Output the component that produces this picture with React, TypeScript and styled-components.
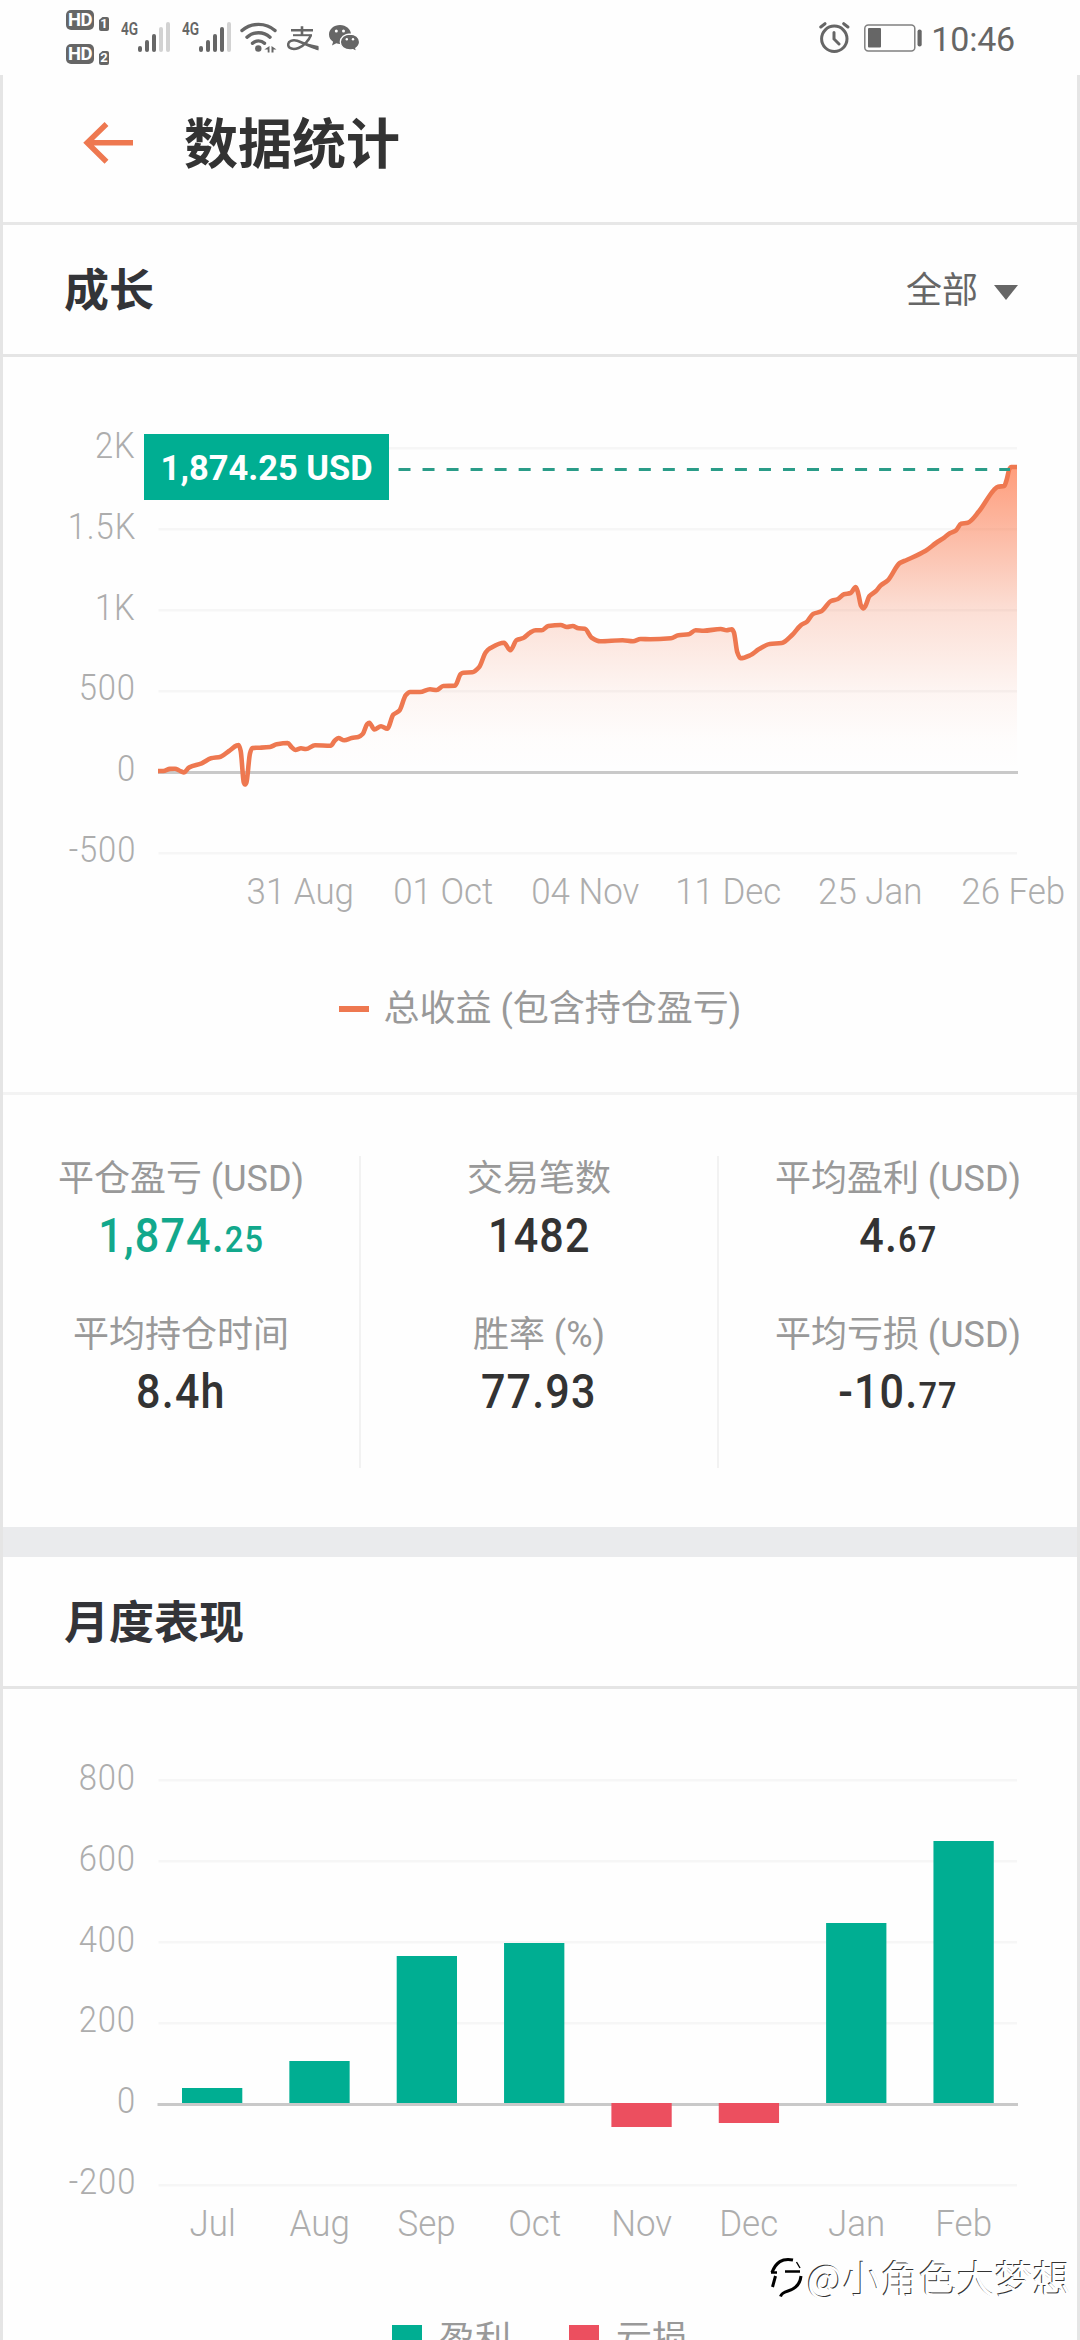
import React from "react";
import styled, { createGlobalStyle } from "styled-components";

const GREEN = "#00ae92";
const RED = "#ec4f5f";
const ORANGE = "#ee7850";

const GlobalStyle = createGlobalStyle`
  * { box-sizing: border-box; }
  html, body { margin: 0; padding: 0; background: #fff; overflow: hidden; }
  body { font-family: Roboto, "Noto Sans CJK SC", sans-serif; color: #333; }
  svg { display: block; flex: none; }
`;

const Screen = styled.div`
  position: relative;
  width: 1080px;
  height: 2340px;
  overflow: hidden;
  background: #fefefe;
`;

/* ---------- status bar ---------- */

const StatusBar = styled.div`
  display: flex;
  justify-content: space-between;
  height: 75px;
  padding: 0 65px 0 65px;
  color: #666;
`;

const StatusLeft = styled.div`
  display: flex;
  align-items: flex-start;
`;

const SimStack = styled.div`
  display: flex;
  flex-direction: column;
  gap: 14px;
  margin: 10px 12px 0 1px;
`;

const SimRow = styled.div`
  display: flex;
  align-items: flex-end;
  gap: 5px;
`;

const HdBadge = styled.span`
  width: 28px;
  height: 20px;
  border-radius: 5px;
  background: #666;
  color: #fff;
  font-size: 18.5px;
  font-weight: 700;
  line-height: 21px;
  text-align: center;
  letter-spacing: -0.5px;
`;

const SimBadge = styled.span`
  width: 10px;
  height: 14px;
  margin-bottom: -1px;
  border-radius: 2px;
  background: #666;
  clip-path: polygon(35% 0, 100% 0, 100% 100%, 0 100%, 0 22%);
  color: #fff;
  font-size: 13px;
  font-weight: 700;
  line-height: 14px;
  text-align: center;
`;

const Signal = styled.div<{ $gap: number }>`
  display: flex;
  align-items: flex-start;
  margin-right: ${(p) => p.$gap}px;
`;

const NetLabel = styled.span`
  width: 16px;
  margin-top: 19px;
  font-size: 19px;
  font-weight: 600;
  line-height: 20px;
  display: flex;
  span {
    transform: scaleX(0.72);
    transform-origin: left;
  }
`;

const SignalBars = styled.div`
  display: flex;
  align-items: flex-end;
  gap: 3px;
  height: 30px;
  margin: 22px 0 0 1px;
`;

const SignalBar = styled.i<{ $h: number; $on: boolean }>`
  width: 4px;
  height: ${(p) => p.$h}px;
  border-radius: 2px;
  background: ${(p) => (p.$on ? "#666" : "#d2d2d2")};
`;

const StatusIcon = styled.div<{ $top: number; $right: number }>`
  margin: ${(p) => p.$top}px ${(p) => p.$right}px 0 0;
`;

const Clock = styled.span`
  margin-top: 18px;
  font-size: 34px;
  font-weight: 400;
  line-height: 42px;
  letter-spacing: -0.2px;
`;

/* ---------- page ---------- */

const Page = styled.main`
  height: 2265px;
  border: solid #e5e5e5;
  border-width: 0 3px;
`;

const Header = styled.header`
  display: flex;
  align-items: center;
  height: 150px;
  padding: 0 0 12px 80px;
  border-bottom: 3px solid #e7e7e7;
`;

const PageTitle = styled.h1`
  margin: 0 0 0 50px;
  padding-top: 6px;
  font-size: 54px;
  font-weight: 700;
  line-height: 64px;
`;

const SectionHead = styled.div`
  display: flex;
  align-items: center;
  justify-content: space-between;
  height: 132px;
  padding: 0 59px 0 61px;
  border-bottom: 3px solid #e5e5e5;
`;

const SectionTitle = styled.h2`
  margin: 0;
  padding-top: 4px;
  font-size: 45px;
  font-weight: 700;
  line-height: 54px;
  color: #333438;
`;

const Filter = styled.div`
  display: flex;
  align-items: center;
  gap: 16px;
  padding-top: 3px;
  font-size: 36px;
  font-weight: 400;
  line-height: 40px;
  color: #666;
`;

const Caret = styled.i`
  margin-top: 3px;
  border: solid transparent;
  border-width: 15px 12px 0;
  border-top-color: #666;
`;

const ChartSection = styled.section<{ $height: number }>`
  position: relative;
  height: ${(p) => p.$height}px;
  padding-top: 69px;
`;

const ChartRow = styled.div`
  display: flex;
  height: 441px;
`;

const axisFont = `
  font-family: Roboto, sans-serif;
  font-size: 36px;
  font-weight: 300;
  line-height: 36px;
  color: #adadad;
`;

const YAxis = styled.div`
  display: flex;
  flex-direction: column;
  align-items: flex-end;
  justify-content: space-between;
  width: 132px;
  margin-right: 22px;
  padding-top: 2px;
  margin-bottom: -1px;
  ${axisFont}
  span {
    letter-spacing: 1px;
    margin-right: -1px;
    transform: scaleX(0.91);
    transform-origin: right;
  }
`;

const XAxis = styled.div<{ $left: number; $col: number }>`
  display: flex;
  margin: 7px 0 0 ${(p) => p.$left}px;
  ${axisFont}
  span {
    flex: none;
    width: ${(p) => p.$col}px;
    text-align: center;
    white-space: nowrap;
    transform: scaleX(0.97);
  }
`;

const Tooltip = styled.div`
  position: absolute;
  left: 141px;
  top: 77px;
  display: flex;
  align-items: center;
  justify-content: center;
  width: 245px;
  height: 66px;
  padding-top: 2px;
  background: ${GREEN};
  color: #fff;
  font-size: 35px;
  font-weight: 700;
  white-space: nowrap;
  span {
    transform: scaleX(0.985);
  }
`;

const Legend = styled.div<{ $gap: number; $top: number }>`
  display: flex;
  justify-content: center;
  gap: ${(p) => p.$gap}px;
  margin-top: ${(p) => p.$top}px;
`;

const LegendItem = styled.div<{ $gap: number }>`
  display: flex;
  align-items: center;
  gap: ${(p) => p.$gap}px;
  font-size: 36px;
  line-height: 44px;
  color: #999;
`;

const Swatch = styled.i<{ $color: string; $h: number }>`
  width: 30px;
  height: ${(p) => p.$h}px;
  background: ${(p) => p.$color};
`;

/* ---------- statistics ---------- */

const Stats = styled.section`
  display: grid;
  grid-template-columns: 358px 358px 358px;
  height: 435px;
  padding-top: 61px;
  border-top: 3px solid #f3f3f3;
`;

const StatColumn = styled.div`
  height: 312px;
  padding-top: 1px;
  border-right: 2px solid #f2f2f2;
  &:last-child {
    border-right: 0;
  }
`;

const Stat = styled.div`
  display: flex;
  flex-direction: column;
  align-items: center;
  height: 156px;
`;

const StatLabel = styled.div`
  font-size: 36px;
  line-height: 44px;
  color: #999;
  white-space: nowrap;
`;

const StatValue = styled.div<{ $positive?: boolean }>`
  margin-top: 7px;
  font-size: 49px;
  font-weight: 500;
  line-height: 56px;
  letter-spacing: 1.3px;
  color: ${(p) => (p.$positive ? "#12a88c" : "#333")};
  transform: scaleX(0.88);
  white-space: nowrap;
  small {
    font-size: 37px;
  }
`;

const Band = styled.div`
  height: 30px;
  background: #eaebed;
`;

const Watermark = styled.div`
  position: absolute;
  left: 768px;
  top: 2254px;
  display: flex;
  align-items: center;
  gap: 3px;
  font-family: "Noto Sans CJK SC", sans-serif;
  font-size: 38px;
  font-weight: 400;
  line-height: 46px;
  color: #fff;
  text-shadow: -1px -1px 0 #333;
  white-space: nowrap;
`;

/* ---------- data ---------- */

type Point = [number, number];

const growth: Point[] = [
  [158, 771], [163.3, 771], [170, 768.9], [175, 768.7], [179.3, 770.5], [183.7, 772.5], [189.3, 767.3],
  [201.7, 763.3], [211, 758.3], [220.7, 756.7], [229, 751], [236.7, 745.5], [238.7, 745], [240.7, 751],
  [243.8, 782.5], [245, 784.5], [246.4, 782.5], [250, 753.3], [252.3, 748], [260, 747.7], [270, 747],
  [276.7, 744.3], [287.7, 743], [291.7, 747.3], [295.3, 750], [301, 748.3], [306, 749], [315, 745.3],
  [330.7, 745.7], [334.7, 740.7], [338.3, 738], [344.3, 740.3], [351.7, 738], [358.3, 737], [362.7, 734],
  [367, 724.3], [369.3, 722.7], [374.3, 729.5], [381, 726.3], [387.3, 728.7], [393.3, 714.7],
  [399.3, 710.7], [405.7, 695.3], [410, 692], [420, 692], [430, 689.3], [436.7, 690], [443.3, 686],
  [455, 685.7], [460.7, 674], [463.3, 672.7], [472.3, 672.3], [479, 667.3], [485.7, 652.3], [490, 648.3],
  [504, 642.7], [510.3, 650.3], [516.7, 640], [523.3, 638], [530, 632.7], [535.7, 630.3], [541.7, 630.3],
  [548.3, 626], [560.7, 625], [566.9, 627], [572.7, 626], [578.6, 628.3], [584.8, 628.7], [591.7, 637.7],
  [600.3, 641.3], [622.6, 640.3], [633, 641.3], [640.6, 639], [650.2, 639.3], [670.9, 638.3],
  [678.4, 635.3], [688.8, 634.3], [695.6, 630.3], [703.6, 630.7], [720.8, 629], [726.6, 630.3],
  [731.8, 629.3], [733.9, 632.3], [737.3, 652.3], [740.4, 658.3], [750.7, 655], [758.7, 649.3],
  [769.7, 644], [781.7, 643], [792.4, 634.7], [800.7, 625.3], [806.9, 621.7], [813, 614], [821.3, 611.3],
  [831, 601], [837.9, 599], [844, 594.3], [850.6, 593], [855.8, 587], [858.2, 593.3], [861, 605.7],
  [863.4, 608.5], [865.4, 606], [869.5, 596], [875.7, 591.3], [880.9, 585.3], [887.8, 580.3],
  [899.8, 563], [906.7, 560], [925.7, 550.7], [936, 543], [944.6, 537.3], [949.8, 533.3], [956, 530.3],
  [961.1, 523.7], [967.7, 522.7], [979, 511.3], [993.9, 490], [998, 486.7], [1004.2, 486], [1006.6, 480],
  [1009.4, 469], [1011, 467], [1017, 467],
];

const months = ["Jul", "Aug", "Sep", "Oct", "Nov", "Dec", "Jan", "Feb"];
const barHeights = [15, 42, 147, 160, -24, -20, 180, 262];

/* Monotone cubic interpolation, so the curve never overshoots a point. */
function smoothPath(pts: Point[]): string {
  const n = pts.length;
  const slope: number[] = [];
  for (let i = 0; i < n - 1; i++) {
    slope.push((pts[i + 1][1] - pts[i][1]) / (pts[i + 1][0] - pts[i][0]));
  }
  const m = pts.map((_, i) => {
    if (i === 0) return slope[0];
    if (i === n - 1) return slope[n - 2];
    const a = slope[i - 1];
    const b = slope[i];
    return a * b <= 0 ? 0 : (2 * a * b) / (a + b);
  });
  let d = `M${pts[0][0]},${pts[0][1]}`;
  for (let i = 0; i < n - 1; i++) {
    const [x0, y0] = pts[i];
    const [x1, y1] = pts[i + 1];
    const h = (x1 - x0) / 3;
    d += `C${x0 + h},${(y0 + m[i] * h).toFixed(2)} ${x1 - h},${(y1 - m[i + 1] * h).toFixed(2)} ${x1},${y1}`;
  }
  return d;
}

/* ---------- icons ---------- */

const WifiIcon = () => (
  <svg width="37" height="31" viewBox="0 0 37 31" fill="none" stroke="#666" strokeWidth="3.4" strokeLinecap="round">
    <path d="M2 8.5C11 .3 26 .3 35 8.5" />
    <path d="M7 15.2c6.500-6 16.500-6 23 0" />
    <path d="M12.500 21.300c3.500-3.300 8.500-3.300 12 0" />
    <circle cx="18.300" cy="26.500" r="3.200" fill="#666" stroke="none" />
    <path d="M29.500 24v6.500h-1.800v-3h-3.400zM31.500 24l5 3.500h-3v3h-2z" fill="#666" stroke="none" />
  </svg>
);

const AlipayIcon = () => (
  <svg width="32" height="26" viewBox="0 0 32 26" fill="none" stroke="#666" strokeWidth="2">
    <path d="M4 4.300h22M15 .3v9" strokeWidth="2.600" />
    <path d="M6 9.200h19" />
    <path d="M24 9c-2 5-7 11-12.500 13C6 24 1.500 22.500 1.200 19c-.3-4 4.500-5.500 9-4.200 5 1.400 8 3.900 21 8.200" strokeWidth="2.500" />
    <path d="M18 17l13.500 3v4.500L20 19z" fill="#666" stroke="none" />
  </svg>
);

const WechatIcon = () => (
  <svg width="31" height="27" viewBox="0 0 31 27">
    <path d="M11 0C4.900 0 0 4.200 0 9.500c0 3 1.600 5.600 4.100 7.300L3 20.500l4.300-2.200c1.200.4 2.400.6 3.700.6 6.100 0 11-4.200 11-9.400S17.100 0 11 0z" fill="#666" />
    <path d="M21 9c-5.400 0-9.700 3.600-9.700 8.100S15.600 25 21 25c1 0 2-.1 2.900-.4l3.800 2-.9-3.300c2.300-1.500 3.800-3.700 3.800-6.200C30.600 12.600 26.400 9 21 9z" fill="#666" stroke="#fff" strokeWidth="1.300" />
    <circle cx="7.300" cy="6" r="1.500" fill="#fff" />
    <circle cx="14.500" cy="6" r="1.500" fill="#fff" />
    <circle cx="17.800" cy="14.200" r="1.200" fill="#fff" />
    <circle cx="24" cy="14.200" r="1.200" fill="#fff" />
  </svg>
);

const AlarmIcon = () => (
  <svg width="31" height="31" viewBox="0 0 31 31" fill="none" stroke="#666" strokeWidth="3" strokeLinecap="round">
    <circle cx="15.300" cy="16.800" r="12.700" />
    <path d="M15 10.500v6.500l5 5M1.800 5L6 1.700M28.900 5l-4.200-3.300" />
  </svg>
);

const BatteryIcon = () => (
  <svg width="58" height="28" viewBox="0 0 58 28">
    <rect x="0.800" y="0.900" width="50" height="26" rx="3.500" fill="none" stroke="#808080" strokeWidth="1.500" />
    <rect x="4" y="4" width="13" height="19.500" rx="1" fill="#666" />
    <rect x="53.500" y="5.500" width="4.200" height="17" rx="2" fill="#666" />
  </svg>
);

const BackArrow = () => (
  <svg width="51" height="42" viewBox="0 0 51 42" fill="none" stroke={ORANGE} strokeWidth="5.500">
    <path d="M50 20.700H4M23.500 2L4.200 20.700 23.500 39.800" />
  </svg>
);

const WatermarkLogo = () => (
  <svg width="36" height="42" viewBox="0 0 36 42" fill="none" stroke="#000">
    <path d="M4 16.500C8 6 14 2 25 4" strokeWidth="3.200" />
    <path d="M3 16.500h6M17 15.500h15" strokeWidth="2.400" />
    <path d="M7.500 20L4.500 31M33 20c-1 9-6 13-13 15-5 1.500-6.500 2.500-7.500 5.500" strokeWidth="3" />
    <path d="M28.500 6l3.500 6" strokeWidth="1.400" />
  </svg>
);

const Bars = ({ on }: { on: number }) => (
  <SignalBars>
    {[6, 12, 18, 25, 30].map((h, i) => (
      <SignalBar key={h} $h={h} $on={i < on} />
    ))}
  </SignalBars>
);

/* ---------- charts ---------- */

const gridLines = [0, 1, 2, 3, 5];

const GrowthChart = () => {
  const line = smoothPath(growth);
  return (
    <svg width="861" height="441" viewBox="157 426 861 441">
      <defs>
        <linearGradient id="area" gradientUnits="userSpaceOnUse" x1="0" y1="467" x2="0" y2="772">
          <stop offset="0" stopColor="#ff7d50" stopOpacity="0.75" />
          <stop offset="0.210" stopColor="#fb7a4f" stopOpacity="0.52" />
          <stop offset="0.470" stopColor="#f5764c" stopOpacity="0.230" />
          <stop offset="0.730" stopColor="#f5764c" stopOpacity="0.070" />
          <stop offset="0.900" stopColor="#f5764c" stopOpacity="0.010" />
          <stop offset="1" stopColor="#f5764c" stopOpacity="0" />
        </linearGradient>
      </defs>
      {gridLines.map((i) => (
        <rect key={i} x="158.500" y={447 + i * 81} width="858.500" height="2.500" fill="#f6f6f6" />
      ))}
      <path d={`${line}V772H158Z`} fill="url(#area)" />
      <rect x="158" y="771" width="860" height="3" fill="#c9c9c9" />
      <path d={line} fill="none" stroke={ORANGE} strokeWidth="4.600" strokeLinejoin="round" />
      <path d="M398.500 469.400H1010" stroke="#2a9c88" strokeWidth="3" strokeDasharray="12 12.030" />
    </svg>
  );
};

const MonthlyChart = () => (
  <svg width="861" height="441" viewBox="157 1758 861 441">
    {gridLines.map((i) => (
      <rect key={i} x="158.500" y={1779 + i * 81} width="858.500" height="2.500" fill="#f6f6f6" />
    ))}
    <rect x="157.500" y="2103" width="860.500" height="3" fill="#c9c9c9" />
    {barHeights.map((h, i) => (
      <rect
        key={months[i]}
        x={182 + i * 107.350}
        y={h > 0 ? 2103 - h : 2103}
        width="60.300"
        height={Math.abs(h)}
        fill={h > 0 ? GREEN : RED}
      />
    ))}
  </svg>
);

/* ---------- app ---------- */

interface StatItem {
  label: string;
  value: string;
  cents?: string;
  positive?: boolean;
}

const stats: StatItem[][] = [
  [
    { label: "平仓盈亏 (USD)", value: "1,874.", cents: "25", positive: true },
    { label: "平均持仓时间", value: "8.4h" },
  ],
  [
    { label: "交易笔数", value: "1482" },
    { label: "胜率 (%)", value: "77.93" },
  ],
  [
    { label: "平均盈利 (USD)", value: "4.", cents: "67" },
    { label: "平均亏损 (USD)", value: "-10.", cents: "77" },
  ],
];

export default function App() {
  return (
    <Screen>
      <GlobalStyle />
      <StatusBar>
        <StatusLeft>
          <SimStack>
            <SimRow><HdBadge>HD</HdBadge><SimBadge>1</SimBadge></SimRow>
            <SimRow><HdBadge>HD</HdBadge><SimBadge>2</SimBadge></SimRow>
          </SimStack>
          <Signal $gap={12}>
            <NetLabel><span>4G</span></NetLabel>
            <Bars on={3} />
          </Signal>
          <Signal $gap={9}>
            <NetLabel><span>4G</span></NetLabel>
            <Bars on={4} />
          </Signal>
          <StatusIcon $top={22} $right={10}><WifiIcon /></StatusIcon>
          <StatusIcon $top={26} $right={10}><AlipayIcon /></StatusIcon>
          <StatusIcon $top={25} $right={0}><WechatIcon /></StatusIcon>
        </StatusLeft>
        <StatusLeft>
          <StatusIcon $top={22} $right={14}><AlarmIcon /></StatusIcon>
          <StatusIcon $top={24} $right={9}><BatteryIcon /></StatusIcon>
          <Clock>10:46</Clock>
        </StatusLeft>
      </StatusBar>

      <Page>
        <Header>
          <BackArrow />
          <PageTitle>数据统计</PageTitle>
        </Header>

        <SectionHead>
          <SectionTitle>成长</SectionTitle>
          <Filter>全部<Caret /></Filter>
        </SectionHead>
        <ChartSection $height={735}>
          <ChartRow>
            <YAxis>
              {["2K", "1.5K", "1K", "500", "0", "-500"].map((t) => <span key={t}>{t}</span>)}
            </YAxis>
            <GrowthChart />
          </ChartRow>
          <XAxis $left={226} $col={142.5}>
            {["31 Aug", "01 Oct", "04 Nov", "11 Dec", "25 Jan", "26 Feb"].map((t) => <span key={t}>{t}</span>)}
          </XAxis>
          <Legend $gap={0} $top={77}>
            <LegendItem $gap={15}><Swatch $color={ORANGE} $h={6} />总收益 (包含持仓盈亏)</LegendItem>
          </Legend>
          <Tooltip><span>1,874.25 USD</span></Tooltip>
        </ChartSection>

        <Stats>
          {stats.map((column) => (
            <StatColumn key={column[0].label}>
              {column.map((s) => (
                <Stat key={s.label}>
                  <StatLabel>{s.label}</StatLabel>
                  <StatValue $positive={s.positive}>
                    {s.value}
                    {s.cents && <small>{s.cents}</small>}
                  </StatValue>
                </Stat>
              ))}
            </StatColumn>
          ))}
        </Stats>
        <Band />

        <SectionHead>
          <SectionTitle>月度表现</SectionTitle>
        </SectionHead>
        <ChartSection $height={651}>
          <ChartRow>
            <YAxis>
              {["800", "600", "400", "200", "0", "-200"].map((t) => <span key={t}>{t}</span>)}
            </YAxis>
            <MonthlyChart />
          </ChartRow>
          <XAxis $left={155.500} $col={107.350}>
            {months.map((t) => <span key={t}>{t}</span>)}
          </XAxis>
          <Legend $gap={58} $top={76}>
            <LegendItem $gap={17}><Swatch $color={GREEN} $h={30} />盈利</LegendItem>
            <LegendItem $gap={17}><Swatch $color={RED} $h={30} />亏损</LegendItem>
          </Legend>
        </ChartSection>
      </Page>

      <Watermark>
        <WatermarkLogo />
        @小角色大梦想
      </Watermark>
    </Screen>
  );
}
